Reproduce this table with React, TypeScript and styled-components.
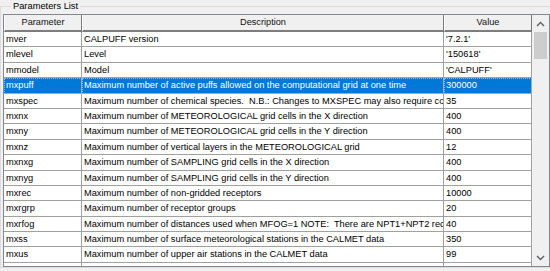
import React from "react";
import styled, { createGlobalStyle } from "styled-components";

const Global = createGlobalStyle`
  html, body { margin: 0; padding: 0; background: #f0f0f0; }
  body { font-family: "Liberation Sans", Arial, sans-serif; }
`;

const GroupBox = styled.fieldset`
  margin: 0;
  width: 550px;
  box-sizing: border-box;
  border: 1px solid #dcdcdc;
  border-right: none;
  padding: 2px 0 0 2px;
  min-width: 0;
`;

const Legend = styled.legend`
  margin-left: 8px;
  padding: 0 2px;
  font-size: 9.3px;
  line-height: 12px;
  color: #000;
`;

const Frame = styled.div`
  display: flex;
  border: 1px solid #828790;
  height: 251px;
  background: #fff;
  overflow: hidden;
`;

const Table = styled.div`
  display: flex;
  flex-direction: column;
  width: 528px;
  overflow: hidden;
`;

const Row = styled.div<{ $selected?: boolean }>`
  display: grid;
  grid-template-columns: 78px 362px 88px;
  height: 15.4px;
  flex: none;
  background: ${(p) => (p.$selected ? "#0078d7" : "#fff")};
  color: ${(p) => (p.$selected ? "#fff" : "#000")};
  font-size: 9.25px;
`;

const Cell = styled.div<{ $selected?: boolean }>`
  box-sizing: border-box;
  border-right: 1px solid #a0a0a0;
  border-bottom: 1px solid #a0a0a0;
  padding: 0 0 0 2px;
  line-height: 14.4px;
  white-space: pre;
  overflow: hidden;
  outline: ${(p) => (p.$selected ? "1px dotted #8fb8e6" : "none")};
  outline-offset: -1px;
`;

const HeaderRow = styled.div`
  display: grid;
  grid-template-columns: 78px 362px 88px;
  height: 17px;
  flex: none;
  background: #f0f0f0;
  font-size: 9.2px;
`;

const HeaderCell = styled.div`
  box-sizing: border-box;
  border-right: 1px solid #7a7a7a;
  border-bottom: 2px solid #7d7d7d;
  border-left: 1px solid #ffffff;
  text-align: center;
  line-height: 15px;
  color: #111;
`;

const ScrollBar = styled.div`
  width: 17px;
  flex: none;
  background: #f0f0f0;
  display: flex;
  flex-direction: column;
  align-items: center;
`;

const ArrowButton = styled.div`
  height: 17px;
  width: 17px;
  display: flex;
  align-items: center;
  justify-content: center;
  flex: none;
`;

const Thumb = styled.div`
  width: 13px;
  height: 27px;
  background: #cdcdcd;
  flex: none;
`;

const Track = styled.div`
  flex: 1;
`;

const Chevron = ({ up }: { up?: boolean }) => (
  <svg width="9" height="6" viewBox="0 0 9 6">
    <path
      d={up ? "M1 5 L4.5 1.5 L8 5" : "M1 1 L4.5 4.5 L8 1"}
      fill="none"
      stroke="#606060"
      strokeWidth="1.4"
    />
  </svg>
);

const rows: [string, string, string][] = [
  ["mver", "CALPUFF version", "'7.2.1'"],
  ["mlevel", "Level", "'150618'"],
  ["mmodel", "Model", "'CALPUFF'"],
  ["mxpuff", "Maximum number of active puffs allowed on the computational grid at one time", "300000"],
  ["mxspec", "Maximum number of chemical species.  N.B.: Changes to MXSPEC may also require code changes", "35"],
  ["mxnx", "Maximum number of METEOROLOGICAL grid cells in the X direction", "400"],
  ["mxny", "Maximum number of METEOROLOGICAL grid cells in the Y direction", "400"],
  ["mxnz", "Maximum number of vertical layers in the METEOROLOGICAL grid", "12"],
  ["mxnxg", "Maximum number of SAMPLING grid cells in the X direction", "400"],
  ["mxnyg", "Maximum number of SAMPLING grid cells in the Y direction", "400"],
  ["mxrec", "Maximum number of non-gridded receptors", "10000"],
  ["mxrgrp", "Maximum number of receptor groups", "20"],
  ["mxrfog", "Maximum number of distances used when MFOG=1 NOTE:  There are NPT1+NPT2 receptors", "40"],
  ["mxss", "Maximum number of surface meteorological stations in the CALMET data", "350"],
  ["mxus", "Maximum number of upper air stations in the CALMET data", "99"],
  ["mxpt1", "Maximum number of point sources with constant emissions", "5000"],
];

const SELECTED = 3;

export default function App() {
  return (
    <>
      <Global />
      <GroupBox>
        <Legend>Parameters List</Legend>
        <Frame>
          <Table>
            <HeaderRow>
              <HeaderCell>Parameter</HeaderCell>
              <HeaderCell>Description</HeaderCell>
              <HeaderCell>Value</HeaderCell>
            </HeaderRow>
            {rows.map((r, i) => (
              <Row key={r[0]} $selected={i === SELECTED}>
                {r.map((c, j) => (
                  <Cell key={j} $selected={i === SELECTED}>
                    {c}
                  </Cell>
                ))}
              </Row>
            ))}
          </Table>
          <ScrollBar>
            <ArrowButton>
              <Chevron up />
            </ArrowButton>
            <Thumb />
            <Track />
            <ArrowButton>
              <Chevron />
            </ArrowButton>
          </ScrollBar>
        </Frame>
      </GroupBox>
    </>
  );
}
